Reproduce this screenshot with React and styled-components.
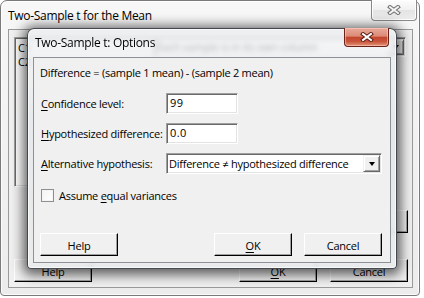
import React from 'react';
import styled, { createGlobalStyle } from 'styled-components';

const Global = createGlobalStyle`
  html, body { margin: 0; padding: 0; background: #ffffff; }
  body {
    width: 424px; height: 298px; overflow: hidden;
    font-family: "Open Sans", "Noto Sans", sans-serif;
    font-size: 11px; color: #000;
    letter-spacing: -0.25px;
  }
  * { box-sizing: border-box; }
`;

const Desktop = styled.div`
  position: relative;
  width: 424px;
  height: 298px;
  overflow: hidden;
  background: #ffffff;
`;

const Window = styled.div`
  position: absolute;
  left: ${p => p.$x}px;
  top: ${p => p.$y}px;
  width: ${p => p.$w}px;
  height: ${p => p.$h}px;
  display: flex;
  flex-direction: column;
  padding: 0 ${p => p.$pr}px ${p => p.$pb}px ${p => p.$pl}px;
  border: 1px solid ${p => p.$front ? 'rgba(40,44,50,0.85)' : '#7a7a7a'};
  border-radius: 7px 7px 4px 4px;
  background: ${p => p.$front
    ? 'linear-gradient(180deg, rgba(240,242,244,0.74) 0%, rgba(226,229,232,0.84) 40%, rgba(232,234,236,0.9) 100%)'
    : 'linear-gradient(180deg, #f7f7f7 0%, #ececec 100%)'};
  backdrop-filter: ${p => p.$front ? 'blur(2.5px)' : 'none'};
  box-shadow: ${p => p.$front
    ? 'inset 0 0 0 1px rgba(255,255,255,0.7), 0 2px 12px 4px rgba(0,0,0,0.6)'
    : 'inset 0 0 0 1px rgba(255,255,255,0.8)'};
`;

const TitleBar = styled.div`
  display: flex;
  justify-content: space-between;
  align-items: flex-start;
  height: ${p => p.$h}px;
  margin: 0 -${p => p.$pr}px 0 -${p => p.$pl}px;
  padding-left: ${p => p.$textLeft}px;
`;

const TitleText = styled.div`
  font-size: 12px;
  line-height: ${p => p.$h}px;
  padding-top: ${p => p.$nudge || 0}px;
  color: #000;
  white-space: nowrap;
  letter-spacing: -0.3px;
`;

const CloseButton = styled.div`
  width: ${p => p.$w}px;
  height: ${p => p.$h}px;
  margin-top: -1px;
  margin-right: ${p => p.$mr}px;
  display: flex;
  align-items: center;
  justify-content: center;
  border: 1px solid ${p => p.$red ? '#6a2218' : '#8a8a8a'};
  border-top: none;
  border-radius: 0 0 4px 4px;
  background: ${p => p.$red
    ? 'linear-gradient(180deg, #e9aa9b 0%, #dc8a76 45%, #c4452d 52%, #c9553c 75%, #e39478 100%)'
    : 'linear-gradient(180deg, #fdfdfd 0%, #f1f1f1 48%, #e4e4e4 52%, #ededed 100%)'};
  box-shadow: inset 0 0 0 1px ${p => p.$red ? 'rgba(255,210,200,0.55)' : 'rgba(255,255,255,0.9)'};
`;

const Client = styled.div`
  flex: 1;
  display: flex;
  flex-direction: column;
  background: #f0f0f0;
  border: 1px solid ${p => p.$front ? '#8d9197' : '#9a9a9a'};
  padding: ${p => p.$pad};
`;

const Sunken = styled.div`
  background: #ffffff;
  border-style: solid;
  border-width: 1px;
  border-color: #a0a0a0 #ffffff #ffffff #a0a0a0;
  box-shadow: inset 1px 1px 0 #696969, inset -1px -1px 0 #e3e3e3;
`;

const ListBox = styled(Sunken)`
  width: 140px;
  height: 150px;
  padding: 3px 3px;
  line-height: 14px;
`;

const BackTopRow = styled.div`
  display: flex;
  justify-content: space-between;
  align-items: flex-start;
  padding-right: 2px;
`;

const Combo = styled(Sunken)`
  width: ${p => p.$w}px;
  height: ${p => p.$h}px;
  display: flex;
  align-items: center;
  justify-content: space-between;
  padding: 0 1px 0 2px;
  white-space: nowrap;
  overflow: hidden;
`;

const ComboText = styled.span`
  line-height: 16px;
`;

const DropButton = styled.div`
  flex: none;
  width: 17px;
  height: ${p => p.$h}px;
  display: flex;
  align-items: center;
  justify-content: center;
  background: #f0f0f0;
  border-style: solid;
  border-width: 1px;
  border-color: #f0f0f0 #696969 #696969 #f0f0f0;
  box-shadow: inset 1px 1px 0 #ffffff, inset -1px -1px 0 #a0a0a0;
`;

const Arrow = styled.div`
  width: 0; height: 0;
  border-left: 3.5px solid transparent;
  border-right: 3.5px solid transparent;
  border-top: 4px solid #000;
`;

const Button = styled.div`
  width: ${p => p.$w || 78}px;
  height: 23px;
  display: flex;
  align-items: center;
  justify-content: center;
  background: #f0f0f0;
  border-style: solid;
  border-width: 1px;
  border-color: #ffffff #000000 #000000 #ffffff;
  box-shadow: inset -1px -1px 0 #a0a0a0;
  padding-top: 1px;
`;

const ButtonRow = styled.div`
  display: flex;
  align-items: center;
  margin-top: ${p => p.$mt || 'auto'};
`;

const ButtonGroup = styled.div`
  display: flex;
  gap: ${p => p.$gap}px;
  margin-left: auto;
`;

const InfoText = styled.div`
  line-height: 16px;
  white-space: nowrap;
`;

const Form = styled.div`
  display: grid;
  grid-template-columns: 126px auto;
  grid-auto-rows: 21px;
  row-gap: 9px;
  margin-top: 12px;
  align-items: center;
`;

const Label = styled.div`
  padding-left: 1px;
  white-space: nowrap;
`;

const Input = styled(Sunken)`
  width: 72px;
  height: 21px;
  padding: 0 3px;
  line-height: 18px;
  letter-spacing: 0.4px;
`;

const CheckRow = styled.label`
  display: flex;
  align-items: center;
  gap: 5px;
  margin-top: 14px;
  padding-left: 1px;
  height: 14px;
`;

const CheckBox = styled.span`
  width: 13px;
  height: 13px;
  border: 1px solid #8e8f8f;
  background: linear-gradient(135deg, #f4f4f4, #ffffff);
  box-shadow: inset 0 0 0 1px #f4f4f4;
`;

const U = styled.span`
  text-decoration: underline;
  text-underline-offset: 2px;
  text-decoration-thickness: 1px;
`;

function XGlyph({ red }) {
  return (
    <svg width="14" height="10" viewBox="0 0 14 10">
      <g strokeLinecap="square">
        <path d="M3 2 L11 8 M11 2 L3 8" stroke={red ? '#5a1b12' : '#6e6e6e'} strokeWidth="4" />
        <path d="M3 2 L11 8 M11 2 L3 8" stroke={red ? '#ffffff' : '#f4f4f4'} strokeWidth="2" />
      </g>
    </svg>
  );
}

function BackWindow() {
  return (
    <Window $x={0} $y={0} $w={420} $h={296} $pl={7} $pr={6} $pb={7}>
      <TitleBar $h={28} $pl={7} $pr={6} $textLeft={7}>
        <TitleText $h={28} $nudge={1}>Two-Sample t for the Mean</TitleText>
        <CloseButton $w={46} $h={21} $mr={2}><XGlyph /></CloseButton>
      </TitleBar>
      <Client $pad="7px 4px 5px 5px">
        <BackTopRow>
          <ListBox>
            <div>C1</div>
            <div>C2</div>
          </ListBox>
          <Combo $w={252} $h={20}>
            <ComboText>Each sample is in its own column</ComboText>
            <DropButton $h={16}><Arrow /></DropButton>
          </Combo>
        </BackTopRow>
        <ButtonRow $mt="auto">
          <ButtonGroup $gap={0}><Button>Options...</Button></ButtonGroup>
        </ButtonRow>
        <ButtonRow $mt="26px">
          <Button>Help</Button>
          <ButtonGroup $gap={13}>
            <Button><U>O</U>K</Button>
            <Button>Cancel</Button>
          </ButtonGroup>
        </ButtonRow>
      </Client>
    </Window>
  );
}

function OptionsDialog() {
  return (
    <Window $front $x={27} $y={28} $w={370} $h={241} $pl={5} $pr={5} $pb={5}>
      <TitleBar $h={28} $pl={5} $pr={5} $textLeft={7}>
        <TitleText $h={28}>Two-Sample t: Options</TitleText>
        <CloseButton $red $w={45} $h={19} $mr={7}><XGlyph red /></CloseButton>
      </TitleBar>
      <Client $front $pad="7px 8px 6px 6px">
        <InfoText>Difference = (sample 1 mean) - (sample 2 mean)</InfoText>
        <Form>
          <Label><U>C</U>onfidence level:</Label>
          <Input>99</Input>
          <Label><U>H</U>ypothesized difference:</Label>
          <Input>0.0</Input>
          <Label><U>A</U>lternative hypothesis:</Label>
          <Combo $w={216} $h={21}>
            <ComboText>Difference ≠ hypothesized difference</ComboText>
            <DropButton $h={17}><Arrow /></DropButton>
          </Combo>
        </Form>
        <CheckRow>
          <CheckBox />
          <span>Assume <U>e</U>qual variances</span>
        </CheckRow>
        <ButtonRow>
          <Button>Help</Button>
          <ButtonGroup $gap={12}>
            <Button><U>O</U>K</Button>
            <Button>Cancel</Button>
          </ButtonGroup>
        </ButtonRow>
      </Client>
    </Window>
  );
}

export default function App() {
  return (
    <Desktop>
      <Global />
      <BackWindow />
      <OptionsDialog />
    </Desktop>
  );
}
